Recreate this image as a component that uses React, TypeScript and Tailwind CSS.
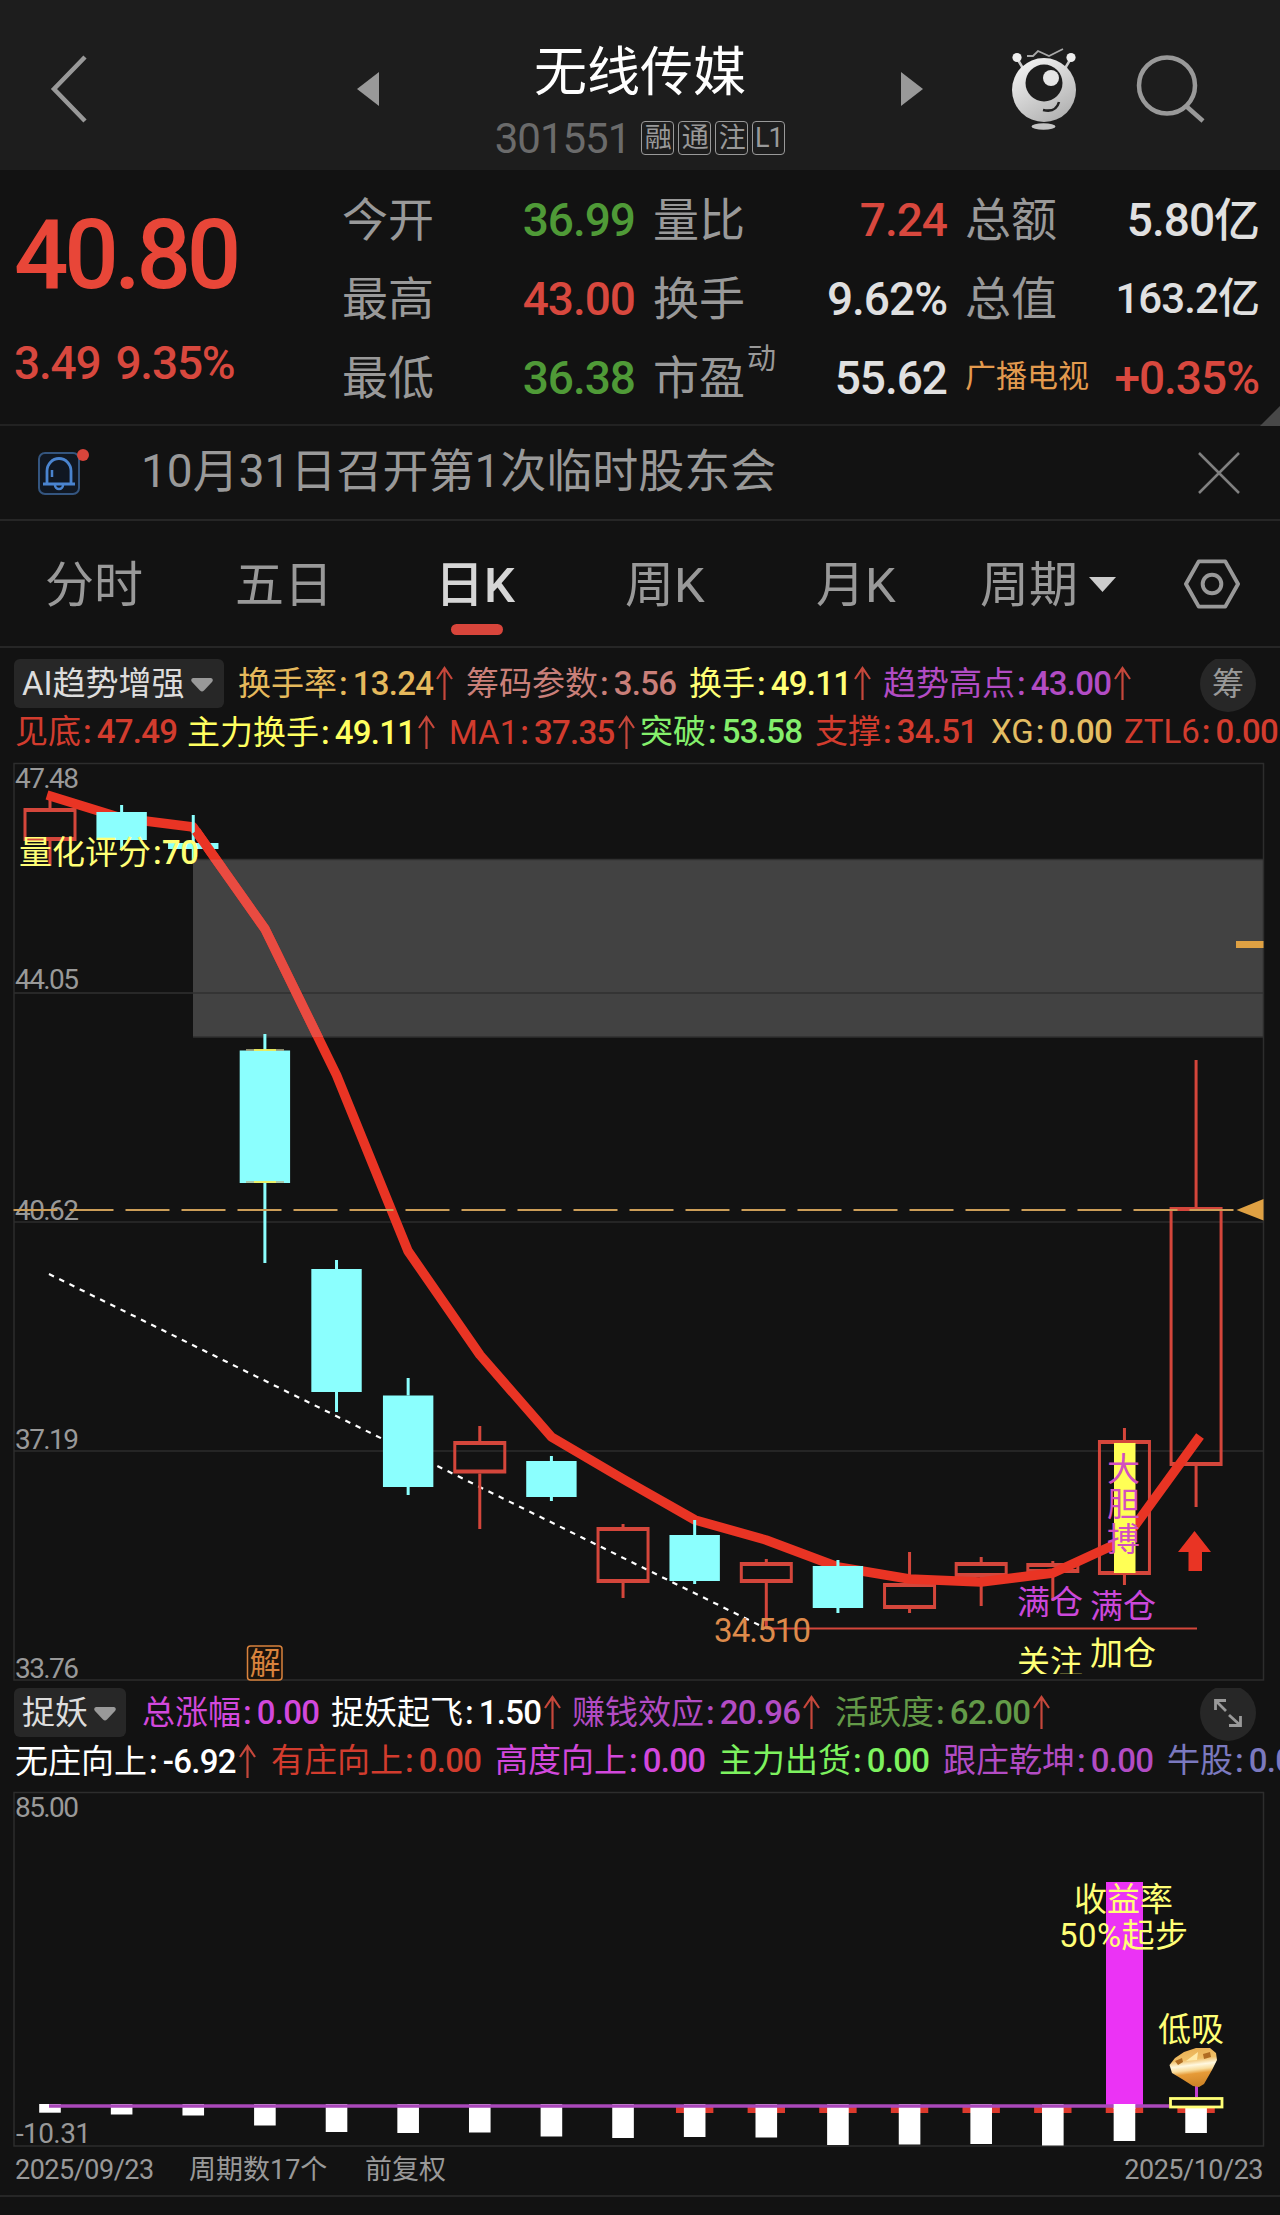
/**
 * Stock detail screen: quote header, daily K-line chart and indicator chart
 */

import type { ReactNode } from "react";

type Tone = "up" | "down" | "flat";

interface Indicator {
  label: string;
  value: string;
  color: string;
  width: string;
  rising?: boolean;
}

interface Candle {
  open: number;
  close: number;
  high: number;
  low: number;
  up: boolean;
}

const FONT = "font-['Roboto','Noto_Sans_CJK_SC',sans-serif]";
const SVG_FONT = "Roboto, 'Noto Sans CJK SC', sans-serif";

const toneClass: Record<Tone, string> = {
  up: "text-[#d8483e]",
  down: "text-[#4f9a37]",
  flat: "text-[#e0e0e0]",
};

const trendTop: Indicator[] = [
  { label: "换手率", value: "13.24", color: "text-[#e5b95c]", width: "w-[228px]", rising: true },
  { label: "筹码参数", value: "3.56", color: "text-[#c97f79]", width: "w-[223px]" },
  { label: "换手", value: "49.11", color: "text-[#ffff76]", width: "w-[194px]", rising: true },
  { label: "趋势高点", value: "43.00", color: "text-[#b24cc4]", width: "w-[260px]", rising: true },
];

const trendBottom: Indicator[] = [
  { label: "见底", value: "47.49", color: "text-[#d23c2e]", width: "w-[172px]" },
  { label: "主力换手", value: "49.11", color: "text-[#ffff60]", width: "w-[262px]", rising: true },
  { label: "MA1", value: "37.35", color: "text-[#d23c2e]", width: "w-[191px]", rising: true },
  { label: "突破", value: "53.58", color: "text-[#84ef6c]", width: "w-[175px]" },
  { label: "支撑", value: "34.51", color: "text-[#d23c2e]", width: "w-[176px]" },
  { label: "XG", value: "0.00", color: "text-[#e3bd62]", width: "w-[133px]" },
  { label: "ZTL6", value: "0.00", color: "text-[#d23c2e]", width: "w-[160px]" },
];

const catchTop: Indicator[] = [
  { label: "总涨幅", value: "0.00", color: "text-[#d248dc]", width: "w-[189px]" },
  { label: "捉妖起飞", value: "1.50", color: "text-white", width: "w-[241px]", rising: true },
  { label: "赚钱效应", value: "20.96", color: "text-[#b24cc4]", width: "w-[263px]", rising: true },
  { label: "活跃度", value: "62.00", color: "text-[#639a48]", width: "w-[230px]", rising: true },
];

const catchBottom: Indicator[] = [
  { label: "无庄向上", value: "-6.92", color: "text-white", width: "w-[256px]", rising: true },
  { label: "有庄向上", value: "0.00", color: "text-[#d23c2e]", width: "w-[224px]" },
  { label: "高度向上", value: "0.00", color: "text-[#d248dc]", width: "w-[224px]" },
  { label: "主力出货", value: "0.00", color: "text-[#7df25f]", width: "w-[224px]" },
  { label: "跟庄乾坤", value: "0.00", color: "text-[#b24cc4]", width: "w-[224px]" },
  { label: "牛股", value: "0.00", color: "text-[#7b79bf]", width: "w-[160px]" },
];

const STEP = 71.63;
const candleX = (i: number) => 50 + i * STEP;

const candles: Candle[] = [
  { open: 841, close: 808, high: 793, low: 866, up: true },
  { open: 812, close: 840, high: 805, low: 850, up: false },
  { open: 843, close: 849, high: 815, low: 860, up: false },
  { open: 1050.5, close: 1183, high: 1034, low: 1263, up: false },
  { open: 1269, close: 1392, high: 1260, low: 1412, up: false },
  { open: 1395.5, close: 1487, high: 1378, low: 1495, up: false },
  { open: 1473.5, close: 1441, high: 1426, low: 1529, up: true },
  { open: 1461, close: 1497, high: 1456, low: 1501, up: false },
  { open: 1583, close: 1527, high: 1524, low: 1598, up: true },
  { open: 1535, close: 1581, high: 1520, low: 1584, up: false },
  { open: 1583, close: 1562, high: 1559, low: 1628, up: true },
  { open: 1566, close: 1608, high: 1560, low: 1613, up: false },
  { open: 1609, close: 1583, high: 1552, low: 1613, up: true },
  { open: 1577, close: 1562, high: 1557, low: 1606, up: true },
  { open: 1573, close: 1563, high: 1561, low: 1601, up: true },
  { open: 1575, close: 1440, high: 1428, low: 1585, up: true },
  { open: 1466, close: 1207, high: 1060, low: 1507, up: true },
];

const maPoints =
  "47,795 121.5,818 193,827 265,929 336.5,1075 408,1251 480,1355 551.5,1437 623,1479 695,1520 766,1540 838,1567 909.5,1579 981,1582 1053,1573 1124.5,1540 1200,1436";

const volumeBottoms = [
  2112.7, 2114.5, 2115.5, 2125.5, 2132, 2133, 2132.5, 2136.5, 2138, 2137, 2137.5, 2145, 2144.5, 2144, 2145.5, 2141, 2133,
];

function Header() {
  return (
    <header className="flex h-[170px] items-stretch bg-[#1d1d1d]">
      <div className="flex w-[357px] pt-[55px] pl-[50px]">
        <svg width="38" height="68" viewBox="0 0 38 68" fill="none" stroke="#999" strokeWidth="4.5">
          <path d="M35 2 L4 34 L35 66" />
        </svg>
      </div>
      <div className="flex w-[566px] justify-between">
        <svg className="mt-[72px]" width="22" height="34" viewBox="0 0 22 34" fill="#999">
          <path d="M22 0 V34 L0 17 Z" />
        </svg>
        <div className="flex flex-col items-center pt-[46px]">
          <h1 className="text-[53px] leading-[54px] text-white">无线传媒</h1>
          <div className="mt-[19px] flex items-center">
            <span className="mr-[11px] pt-[3px] text-[42px] leading-[34px] tracking-[-1px] text-[#6b6b6b]">301551</span>
            <div className="flex gap-[4px]">
              {["融", "通", "注", "L1"].map((tag) => (
                <span
                  key={tag}
                  className="mt-[1px] flex h-[34px] w-[33px] items-center justify-center rounded-[4px] border-[1.5px] border-[#999] text-[27px] leading-none tracking-[-1px] text-[#999]"
                >
                  {tag}
                </span>
              ))}
            </div>
          </div>
        </div>
        <svg className="mt-[72px]" width="22" height="34" viewBox="0 0 22 34" fill="#999">
          <path d="M0 0 V34 L22 17 Z" />
        </svg>
      </div>
      <div className="flex flex-1 pt-[46px] pl-[85px]">
        <svg width="72" height="86" viewBox="1008 46 72 86">
          <defs>
            <linearGradient id="robot" x1="0" y1="0" x2="0.6" y2="1">
              <stop offset="0" stopColor="#fafafa" />
              <stop offset="1" stopColor="#b4b4b4" />
            </linearGradient>
          </defs>
          <path d="M1027 56 H1033 L1038 51 L1049 56 L1063 49" fill="none" stroke="#a8a8a8" strokeWidth="1.8" />
          <path d="M1018 60 L1024 70 M1070 60 L1064 70" stroke="#ccc" strokeWidth="2.5" />
          <circle cx="1017" cy="57.5" r="4.6" fill="#eee" />
          <circle cx="1071" cy="57.5" r="4.6" fill="#eee" />
          <circle cx="1044" cy="90" r="32" fill="url(#robot)" />
          <circle cx="1044" cy="83" r="18.5" fill="#1d1d1d" />
          <circle cx="1051" cy="78" r="8" fill="#e6e6e6" />
          <path d="M1043 110 Q1056 113 1059 102" fill="none" stroke="#222" strokeWidth="2.5" />
          <ellipse cx="1043.5" cy="126.5" rx="12" ry="3.2" fill="#c4c4c4" />
        </svg>
        <svg className="ml-[55px]" width="74" height="80" viewBox="1135 46 74 80" fill="none" stroke="#999" strokeWidth="4.5">
          <circle cx="1167" cy="85.5" r="28" />
          <path d="M1186 106 L1203 121" />
        </svg>
      </div>
    </header>
  );
}

function Quote({ label, value, tone, small }: { label: ReactNode; value: string; tone: Tone; small?: boolean }) {
  return (
    <div className="flex h-[79px] items-center justify-between leading-none whitespace-nowrap">
      <span className="text-[46px] text-[#999]">{label}</span>
      <span className={`font-medium tracking-[-0.022em] ${small ? "text-[42px]" : "text-[46px]"} ${toneClass[tone]}`}>{value}</span>
    </div>
  );
}

function QuotePanel() {
  return (
    <section className="relative flex h-[256px] border-b-2 border-[#222] pt-[10px]">
      <div className="w-[342px] pl-[14px] text-[#e84638]">
        <div className="mt-[27px] text-[96px] leading-[96px] font-medium tracking-[-4.4px]">40.80</div>
        <div className="mt-[37px] flex gap-[15px] text-[46px] leading-[46px] font-medium tracking-[-1.2px] text-[#d8483e]">
          <span>3.49</span>
          <span>9.35%</span>
        </div>
      </div>
      <div className="w-[293px]">
        <Quote label="今开" value="36.99" tone="down" />
        <Quote label="最高" value="43.00" tone="up" />
        <Quote label="最低" value="36.38" tone="down" />
      </div>
      <div className="ml-[18px] w-[294px]">
        <Quote label="量比" value="7.24" tone="up" />
        <Quote label="换手" value="9.62%" tone="flat" />
        <Quote
          label={
            <span className="flex items-start">
              市盈<span className="-mt-[10px] ml-[2px] text-[29px]">动</span>
            </span>
          }
          value="55.62"
          tone="flat"
        />
      </div>
      <div className="ml-[18px] w-[294px]">
        <Quote label="总额" value="5.80亿" tone="flat" />
        <Quote label="总值" value="163.2亿" tone="flat" small />
        <Quote label={<span className="block pb-[2px] text-[31px] text-[#e39a4e]">广播电视</span>} value="+0.35%" tone="up" />
      </div>
      <svg className="absolute right-0 -bottom-[2px]" width="20" height="20" viewBox="0 0 20 20">
        <path d="M20 0 V20 H0 Z" fill="#484848" />
      </svg>
    </section>
  );
}

function Notice() {
  return (
    <section className="flex h-[95px] items-center border-b-2 border-[#262626] pl-[36px]">
      <svg width="56" height="56" viewBox="0 0 56 56" fill="none" className="mt-[-6px]">
        <rect x="3" y="11" width="40" height="41" rx="6" fill="#101722" stroke="#34557f" strokeWidth="2" />
        <path d="M11 41 V29 a12 12.5 0 0 1 24 0 V41 M7 42 H39" stroke="#4a84cf" strokeWidth="2.8" />
        <path d="M19 43 a4 4 0 0 0 8 0 M16 28 V35" stroke="#4a84cf" strokeWidth="2.5" />
        <circle cx="47" cy="13" r="6" fill="#d8453b" />
      </svg>
      <span className="ml-[49px] pb-[3px] text-[46px] leading-none text-[#999]">10月31日召开第1次临时股东会</span>
      <svg className="mr-[40px] ml-auto" width="42" height="42" viewBox="0 0 42 42" stroke="#808080" strokeWidth="2.5">
        <path d="M1 1 L41 41 M41 1 L1 41" />
      </svg>
    </section>
  );
}

function Tabs() {
  return (
    <nav className="flex h-[127px] items-start border-b-2 border-[#262626] text-[49px] leading-none whitespace-nowrap text-[#999]">
      <span className="w-[190px] pt-[40px] pl-[45px]">分时</span>
      <span className="w-[190px] pt-[40px] pl-[45px]">五日</span>
      <div className="flex w-[190px] flex-col items-center pt-[40px]">
        <span className="font-medium text-[#d6d6d6]">日K</span>
        <span className="mt-[14px] ml-[3px] h-[11px] w-[52px] rounded-full bg-[#d8453b]" />
      </div>
      <span className="w-[190px] pt-[40px] pl-[55px]">周K</span>
      <span className="w-[190px] pt-[40px] pl-[56px]">月K</span>
      <span className="flex w-[234px] pt-[40px] pl-[30px]">
        周期
        <svg className="mt-[16px] ml-[11px]" width="27" height="15" viewBox="0 0 27 15">
          <path d="M0 0 H27 L13.5 15 Z" fill="#ccc" />
        </svg>
      </span>
      <svg className="mt-[37px]" width="56" height="52" viewBox="0 0 57 52" fill="none" stroke="#999" strokeWidth="4">
        <path d="M15 3 H42 L55 26 L42 49 H15 L2 26 Z" strokeLinejoin="round" />
        <circle cx="28.5" cy="26" r="9.5" />
      </svg>
    </nav>
  );
}

function IndicatorItem({ item }: { item: Indicator }) {
  return (
    <div className={`flex shrink-0 items-center whitespace-nowrap ${item.width} ${item.color}`}>
      <span>{item.label}</span>
      <span className="mr-[5px] ml-[2px] font-medium">:</span>
      <span className="font-medium tracking-[-0.7px]">{item.value}</span>
      {item.rising && (
        <svg className="ml-[3px] shrink-0" width="17" height="34" viewBox="0 0 17 34" fill="none" stroke="#c5473b" strokeWidth="2.2">
          <path d="M8.5 34 V2 M1 13 L8.5 2 L16 13" />
        </svg>
      )}
    </div>
  );
}

interface IndicatorBarProps {
  name: string;
  chipClass: string;
  top: Indicator[];
  bottom: Indicator[];
  action: ReactNode;
}

function IndicatorBar({ name, chipClass, top, bottom, action }: IndicatorBarProps) {
  return (
    <section className="relative overflow-hidden text-[33px] leading-none">
      <div className="flex h-[49px] items-center pb-[1px] pl-[14px]">
        <div className={`flex h-[49px] shrink-0 items-center rounded-[6px] bg-[#272727] pl-[8px] whitespace-nowrap text-[#ddd] ${chipClass}`}>
          <span>{name}</span>
          <svg className="mt-[4px] ml-[6px]" width="22" height="14" viewBox="0 0 22 14" fill="#999">
            <path d="M2 0 H20 Q23 1 21 4 L13 12.5 Q11 14.5 9 12.5 L1 4 Q-1 1 2 0 Z" />
          </svg>
        </div>
        {top.map((item) => (
          <IndicatorItem key={item.label} item={item} />
        ))}
      </div>
      <div className="flex h-[55px] items-start pt-[7px] pl-[15px]">
        {bottom.map((item) => (
          <IndicatorItem key={item.label} item={item} />
        ))}
      </div>
      <div className="absolute top-[-3px] right-[24px] flex h-[56px] w-[56px] items-center justify-center rounded-full bg-[#272727] text-[32px] text-[#999]">
        {action}
      </div>
    </section>
  );
}

function CandleShape({ candle, x }: { candle: Candle; x: number }) {
  const top = Math.min(candle.open, candle.close);
  const bottom = Math.max(candle.open, candle.close);
  const color = candle.up ? "#d4463b" : "#8bfffe";

  return (
    <g>
      <path d={`M${x} ${candle.high} V${top} M${x} ${bottom} V${candle.low}`} stroke={color} strokeWidth="3" />
      {candle.up ? (
        <path
          d={`M${x - 26.5} ${top} H${x + 26.5} V${bottom} H${x - 26.5} Z M${x - 23.5} ${top + 4} H${x + 23.5} V${bottom - 4} H${x - 23.5} Z`}
          fill={color}
          fillRule="evenodd"
        />
      ) : (
        <rect x={x - 25.2} y={top} width="50.4" height={bottom - top} fill={color} />
      )}
    </g>
  );
}

function KLineChart() {
  return (
    <svg className="block" width="1280" height="920" viewBox="0 762 1280 920" fontFamily={SVG_FONT}>
      {/* Gap zone, frame and grid */}
      <rect x="193" y="859.5" width="1070" height="177.5" fill="#424242" />
      <path d="M193 859.5 H1263 M14 993 H1263 M193 1037 H1263" stroke="#303030" strokeWidth="1.5" />
      <path d="M14 763.5 H1263.5 V1680 H14 Z M14 1222 H1263 M14 1451 H1263" fill="none" stroke="#2d2d2d" strokeWidth="1.5" />

      {/* Price axis */}
      <g fill="#999" fontSize="28">
        <text x="15" y="788" textLength="64">47.48</text>
        <text x="15" y="989" textLength="64">44.05</text>
        <text x="15" y="1220" textLength="64">40.62</text>
        <text x="15" y="1448.5" textLength="64">37.19</text>
        <text x="15" y="1677.5" textLength="64">33.76</text>
      </g>

      <path d="M49 1274 L765 1628" stroke="#fff" strokeWidth="2.2" strokeDasharray="5.5 5.9" />
      <path d="M766 1628.5 H1197" stroke="#d4463b" strokeWidth="2.2" />

      {candles.map((candle, i) => candle.up && <CandleShape key={i} candle={candle} x={candleX(i)} />)}
      <polyline points={maPoints} fill="none" stroke="#e93424" strokeWidth="9.5" strokeLinejoin="round" />
      {candles.map((candle, i) => !candle.up && <CandleShape key={i} candle={candle} x={candleX(i)} />)}
      <path d="M196 831 L222 868" stroke="#e93424" strokeWidth="9.5" />
      {/* The average reads lighter inside the gap zone */}
      <svg x="193" y="859.5" width="200" height="177.5" viewBox="193 859.5 200 177.5">
        <polyline points={maPoints} fill="none" stroke="#e94b41" strokeWidth="9.5" strokeLinejoin="round" />
      </svg>
      <path d="M246 1050 H284 M246 1182 H284" stroke="#b5b58c" strokeWidth="1.5" />
      <path d="M254 1050 H276 M254 1182 H276" stroke="#ffff55" strokeWidth="1.5" />

      <rect x="1236" y="941" width="27.5" height="7" fill="#dfa143" />

      {/* Current price */}
      <path d="M13.500 1210 H1234" stroke="#cc9e58" strokeWidth="2" strokeDasharray="44 12" />
      <path d="M1236.5 1210 L1263.5 1199 V1220.5 Z" fill="#dfa143" />

      {/* Signal bar */}
      <rect x="1114" y="1443" width="21.5" height="130" fill="#ffff55" />
      <g fill="#d24fc0" fontSize="33">
        <text x="1107" y="1481">大</text>
        <text x="1107" y="1516">胆</text>
        <text x="1107" y="1551">搏</text>
      </g>
      <path d="M1194.5 1531 L1211 1552 H1202 V1571 H1188.5 V1552 H1178 Z" fill="#e93424" />

      <g fontSize="33">
        <text x="19" y="864" fill="#ffff76">量化评分</text>
        <text x="153" y="864" fill="#ffff76" fontWeight="500">:</text>
        <text x="162" y="864" fill="#ffff76" fontWeight="500" textLength="37">70</text>
        <text x="1017" y="1614" fill="#cb48da">满仓</text>
        <text x="1090" y="1618" fill="#cb48da">满仓</text>
        <text x="1090" y="1665" fill="#ffff76">加仓</text>
        <text x="714" y="1642" fill="#dd8a4b" textLength="97">34.510</text>
      </g>
      <svg x="1010" y="1640" width="80" height="34" viewBox="1010 1640 80 34">
        <text x="1017" y="1673.5" fill="#ffff76" fontSize="33">关注</text>
      </svg>

      <rect x="247.5" y="1646" width="34.5" height="34" rx="3" fill="#1c130c" stroke="#d9833d" strokeWidth="1.5" />
      <text x="249.5" y="1674" fontSize="31" fill="#d9833d">解</text>
    </svg>
  );
}

function VolumeChart() {
  return (
    <svg className="block" width="1280" height="357" viewBox="0 1791 1280 357" fontFamily={SVG_FONT}>
      <path d="M14 1792.5 H1263.5 V2146 H14 Z" fill="none" stroke="#2d2d2d" strokeWidth="1.5" />
      <g fill="#999" fontSize="28">
        <text x="15" y="1817" textLength="64">85.00</text>
        <text x="16" y="2143" textLength="75">-10.31</text>
      </g>

      <rect x="1106" y="1882" width="37" height="223" fill="#eb33f5" />
      {volumeBottoms.map((bottom, i) => (
        <g key={i}>
          {i >= 9 && <rect x={candleX(i) - 18.7} y="2106" width="37.4" height="7" fill="#dd3a2c" />}
          <rect x={candleX(i) - 10.8} y="2104" width="21.6" height={bottom - 2104} fill="#fff" />
        </g>
      ))}
      <path d="M49 2106 H1169" stroke="#aa49ba" strokeWidth="3.4" />
      <rect x="1113.700" y="2104" width="21.6" height="5" fill="#fff" />

      <path d="M1196.5 2080 V2097" stroke="#c23fd0" strokeWidth="3" />
      <rect x="1170.5" y="2098.5" width="51.5" height="8.5" fill="#121212" stroke="#ffff76" strokeWidth="2.8" />

      {/* Diamond */}
      <defs>
        <linearGradient id="gem" x1="0" y1="0" x2="0.15" y2="1">
          <stop offset="0" stopColor="#e8ac50" />
          <stop offset="0.35" stopColor="#f0bf66" />
          <stop offset="0.5" stopColor="#fff8e0" />
          <stop offset="0.62" stopColor="#f8dc9c" />
          <stop offset="0.72" stopColor="#e69b38" />
          <stop offset="1" stopColor="#d08628" />
        </linearGradient>
      </defs>
      <path
        d="M1169.5 2065 L1175 2058 L1184 2052 L1196 2048 L1210 2048 L1216 2053 L1217 2060 L1212 2070 L1204 2084 L1199 2087 L1193 2086 L1182 2079 L1172 2073 Z"
        fill="url(#gem)"
      />
      <path d="M1175 2061 l7 -3 1 4 -5 3 Z M1203 2054 l7 -2 1 5 -7 2 Z" fill="#b06c22" />
      <path d="M1186 2061 L1198 2052 L1197 2060 Z" fill="#ffe9a8" />

      <g fill="#ffff76" fontSize="33">
        <text x="1074" y="1911">收益率</text>
        <text x="1059" y="1947" textLength="129">50%起步</text>
        <text x="1158" y="2041">低吸</text>
      </g>
    </svg>
  );
}

function App() {
  return (
    <div className={`h-[2215px] w-[1280px] overflow-hidden bg-[#121212] ${FONT}`}>
      <Header />
      <QuotePanel />
      <Notice />
      <Tabs />

      <div className="mt-[11px]">
        <IndicatorBar name="AI趋势增强" chipClass="w-[210px] mr-[14px]" top={trendTop} bottom={trendBottom} action="筹" />
      </div>
      <div className="mt-[-1px]">
        <KLineChart />
      </div>

      <div className="mt-[6px]">
        <IndicatorBar
          name="捉妖"
          chipClass="w-[112px] mr-[16px]"
          top={catchTop}
          bottom={catchBottom}
          action={
            <svg width="30" height="30" viewBox="0 0 30 30" fill="none" stroke="#999" strokeWidth="2.8">
              <path d="M2.5 12 V2.5 H13 M3 3 L13 13 M27.5 18 V27.5 H16 M27 27 L16 17" />
            </svg>
          }
        />
      </div>
      <div className="mt-[-1px]">
        <VolumeChart />
      </div>

      <footer className="flex h-[49px] items-center border-b-2 border-[#262626] pr-[17px] pb-[2px] pl-[15px] text-[27px] leading-none text-[#999]">
        <span className="w-[174px] tracking-[-0.5px]">2025/09/23</span>
        <span className="w-[176px]">周期数17个</span>
        <span>前复权</span>
        <span className="ml-auto tracking-[-0.5px]">2025/10/23</span>
      </footer>
    </div>
  );
}

export default App;
